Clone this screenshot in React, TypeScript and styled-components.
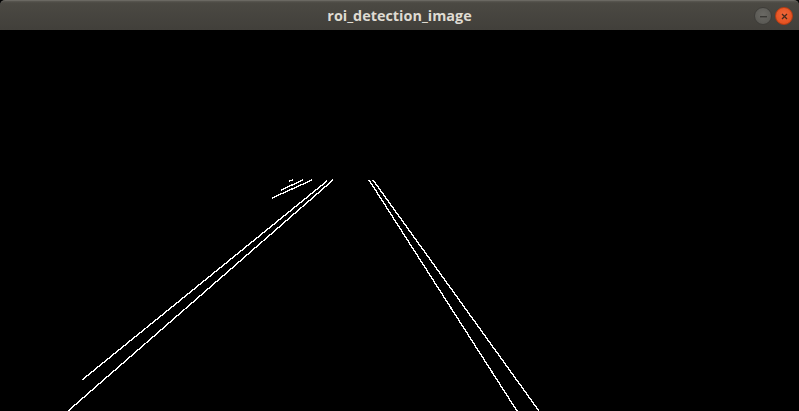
import React from "react";
import styled, { createGlobalStyle } from "styled-components";

const Global = createGlobalStyle`
  html, body { margin: 0; padding: 0; background: #000; }
  #root { width: 799px; height: 411px; }
`;

const Window = styled.div`
  width: 799px;
  height: 411px;
  display: flex;
  flex-direction: column;
  overflow: hidden;
`;

const TitleBar = styled.div`
  height: 30px;
  flex: 0 0 30px;
  box-sizing: border-box;
  display: grid;
  grid-template-columns: 1fr auto 1fr;
  align-items: center;
  background: linear-gradient(to bottom, #5a5852 0px, #4b4943 2px, #413f3a 30px);
  border-top: 1px solid #6a6862;
  border-radius: 5px 5px 0 0;
`;

const Title = styled.div`
  grid-column: 2;
  font-family: "Open Sans", "DejaVu Sans", sans-serif;
  font-weight: 700;
  font-size: 14.4px;
  color: #dfdbd2;
  padding-bottom: 1px;
`;

const Controls = styled.div`
  grid-column: 3;
  justify-self: end;
  display: flex;
  gap: 3px;
  padding-right: 6px;
  padding-top: 1px;
`;

const CircleButton = styled.div<{ $kind: "min" | "close" }>`
  width: 18px;
  height: 18px;
  border-radius: 50%;
  box-sizing: border-box;
  display: flex;
  align-items: center;
  justify-content: center;
  background: ${(p) =>
    p.$kind === "close"
      ? "radial-gradient(circle at 50% 40%, #f2673a, #df4a17)"
      : "radial-gradient(circle at 50% 40%, #6a6964, #55544f)"};
  border: 1px solid ${(p) => (p.$kind === "close" ? "#b83c12" : "#3e3d39")};
`;

const Canvas = styled.div`
  flex: 1;
  background: #000;
  position: relative;
`;

const segments: [number, number, number, number][] = [
  [82, 380, 327, 181],
  [68, 411, 333, 180],
  [272, 198, 312, 180],
  [281, 190, 303, 180],
  [289, 181, 293, 180],
  [369, 180, 517, 411],
  [373, 180, 539, 411],
];

export default function App() {
  return (
    <>
      <Global />
      <Window>
        <TitleBar>
          <Title>roi_detection_image</Title>
          <Controls>
            <CircleButton $kind="min">
              <svg width="9" height="9" viewBox="0 0 9 9">
                <rect x="1" y="4" width="7" height="1.4" fill="#3a3935" />
              </svg>
            </CircleButton>
            <CircleButton $kind="close">
              <svg width="9" height="9" viewBox="0 0 9 9">
                <path d="M2 2 L7 7 M7 2 L2 7" stroke="#4a2a1c" strokeWidth="1.3" />
              </svg>
            </CircleButton>
          </Controls>
        </TitleBar>
        <Canvas>
          <svg width="799" height="381" viewBox="0 30 799 381" style={{ display: "block" }}>
            {segments.map(([x1, y1, x2, y2], i) => (
              <line
                key={i}
                x1={x1}
                y1={y1}
                x2={x2}
                y2={y2}
                stroke="#fff"
                strokeWidth={1.4}
                shapeRendering="crispEdges"
              />
            ))}
          </svg>
        </Canvas>
      </Window>
    </>
  );
}
